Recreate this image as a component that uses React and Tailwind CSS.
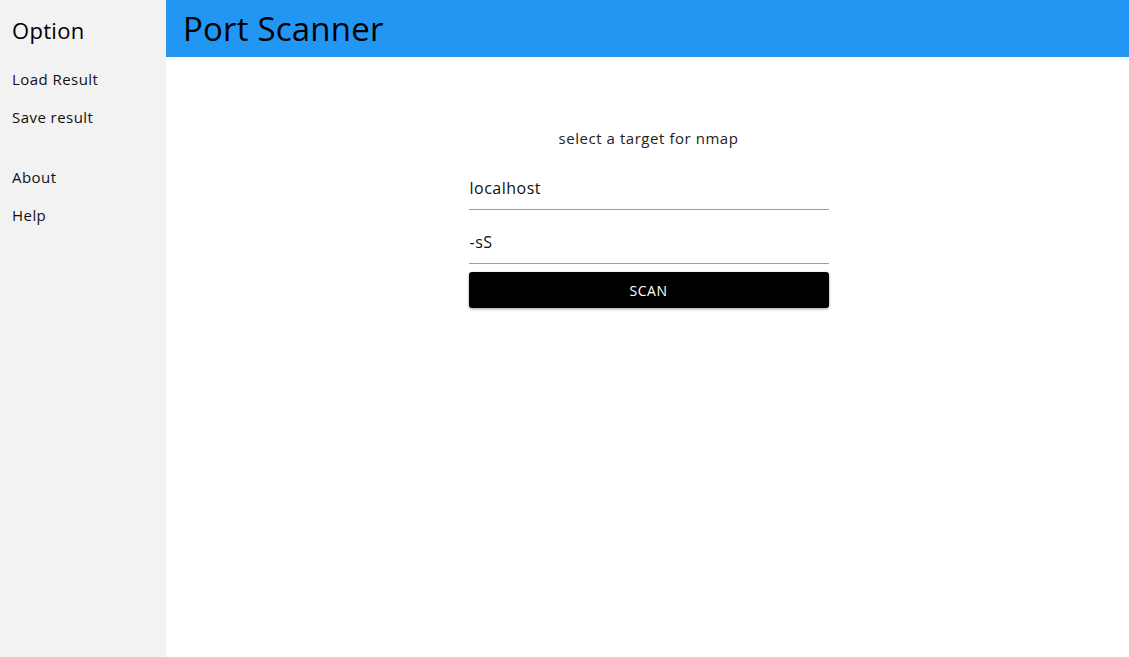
export default function App() {
  const font = { fontFamily: '"Open Sans", "Noto Sans", "DejaVu Sans", sans-serif' };
  return (
    <div className="flex h-[657px] w-full" style={font}>
      <aside className="w-[166px] shrink-0 bg-[#f2f2f2] pl-3 pt-[15px]">
        <div className="text-[22px] leading-[30px] tracking-[0.3px] text-black">Option</div>
        <nav className="mt-[24px] flex flex-col text-[15px] leading-[20px] tracking-[0.45px] text-[#111]">
          <div>Load Result</div>
          <div className="mt-[18px]">Save result</div>
          <div className="mt-[40px]">About</div>
          <div className="mt-[18px]">Help</div>
        </nav>
      </aside>
      <main className="flex flex-1 flex-col bg-white">
        <header className="flex h-[57px] items-center bg-[#2196f3] pl-[17px]">
          <h1 className="text-[33px] leading-none tracking-[0.2px] text-black">Port Scanner</h1>
        </header>
        <div className="flex flex-col items-center pl-[2px] pt-[71px]">
          <div className="text-[15px] leading-[20px] tracking-[0.55px] text-[#222]">select a target for nmap</div>
          <div className="mt-[20px] w-[360px]">
            <div className="flex h-[42px] items-center border-b border-[#9e9e9e] text-[16px] text-[#111]">
              <input
                className="w-full bg-transparent pb-[2px] pl-[1px] tracking-[0.5px] outline-none"
                defaultValue="localhost"
                style={font}
              />
            </div>
            <div className="mt-[12px] flex h-[42px] items-center border-b border-[#9e9e9e] text-[16px] text-[#111]">
              <input
                className="w-full bg-transparent pb-[2px] pl-[1px] tracking-[0.5px] outline-none"
                defaultValue="-sS"
                style={font}
              />
            </div>
            <button
              className="mt-[8px] flex h-[36px] w-full items-center justify-center rounded-[3px] bg-black text-[14px] tracking-[0.5px] text-white shadow-[0_1px_3px_rgba(0,0,0,0.4)]"
              style={font}
            >
              SCAN
            </button>
          </div>
        </div>
      </main>
    </div>
  );
}
